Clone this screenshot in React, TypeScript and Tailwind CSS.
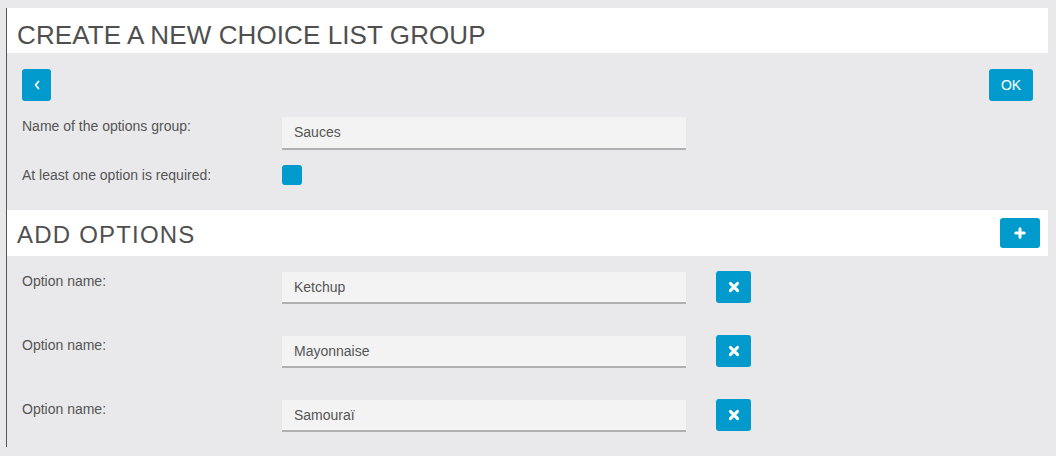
import React from "react";

const BTN = "bg-[#009bcc] rounded-[3px] flex items-center justify-center text-white";

function XIcon() {
  return (
    <svg width="12" height="12" viewBox="0 0 12 12">
      <path d="M2.4 2.4 L9.6 9.6 M9.6 2.4 L2.4 9.6" stroke="white" strokeWidth="3" strokeLinecap="round" fill="none" />
    </svg>
  );
}

function PlusIcon() {
  return (
    <svg width="12" height="12" viewBox="0 0 12 12">
      <path d="M6 1.8 V10.2 M1.8 6 H10.2" stroke="white" strokeWidth="3" strokeLinecap="round" fill="none" />
    </svg>
  );
}

function ChevronIcon() {
  return (
    <svg width="8" height="10" viewBox="0 0 8 10">
      <path d="M5.5 1.5 L2.5 5 L5.5 8.5" stroke="white" strokeWidth="1.8" strokeLinecap="round" strokeLinejoin="round" fill="none" />
    </svg>
  );
}

function TextInput({ value, tall }: { value: string; tall?: boolean }) {
  return (
    <div
      className={`w-[404px] ${tall ? "h-[33px]" : "h-[32px]"} bg-[#f3f3f3] border-b-2 border-[#b1b1b1] flex items-center pl-3 text-[14px] text-[#555]`}
    >
      {value}
    </div>
  );
}

export default function App() {
  const options = ["Ketchup", "Mayonnaise", "Samouraï"];
  return (
    <div
      className="min-h-screen bg-[#e9e9eb] pt-2 pl-[6px]"
      style={{ fontFamily: '"Liberation Sans", Arial, sans-serif' }}
    >
      <div className="w-[1042px] border-l border-[#555]">
        {/* Header 1 */}
        <div className="h-[45px] bg-white pl-[10px] pt-[14px]">
          <h1 className="text-[26px] leading-[26px] text-[#4f4f4f] font-normal tracking-[0.1px]">
            CREATE A NEW CHOICE LIST GROUP
          </h1>
        </div>

        {/* Section 1 */}
        <div className="px-[15px] pt-4 pb-[25px]">
          <div className="flex justify-between items-center">
            <button className={`${BTN} w-[29px] h-[32px]`}>
              <ChevronIcon />
            </button>
            <button className={`${BTN} w-[44px] h-[32px] text-[14px]`}>OK</button>
          </div>

          <div className="flex items-start mt-4">
            <div className="w-[260px] text-[14px] leading-[18px] text-[#555]">
              Name of the options group:
            </div>
            <TextInput value="Sauces" tall />
          </div>

          <div className="flex items-center mt-[15px] h-5">
            <div className="w-[260px] text-[14px] leading-[18px] text-[#555]">
              At least one option is required:
            </div>
            <div className="w-5 h-5 rounded-[3px] bg-[#009bcc]" />
          </div>
        </div>

        {/* Header 2 */}
        <div className="h-[46px] bg-white pl-[10px] flex justify-between items-start">
          <h2 className="pt-[13px] text-[24px] leading-[24px] text-[#4f4f4f] font-normal tracking-[1.2px]">
            ADD OPTIONS
          </h2>
          <button className={`${BTN} w-[40px] h-[30px] mt-2 mr-2`}>
            <PlusIcon />
          </button>
        </div>

        {/* Options */}
        <div className="px-[15px] pt-4 pb-[15px] flex flex-col gap-8">
          {options.map((o) => (
            <div key={o} className="flex items-start">
              <div className="w-[260px] text-[14px] leading-[18px] text-[#555]">Option name:</div>
              <TextInput value={o} />
              <button className={`${BTN} w-[35px] h-[32px] ml-[30px] -mt-px`}>
                <XIcon />
              </button>
            </div>
          ))}
        </div>
      </div>
    </div>
  );
}
